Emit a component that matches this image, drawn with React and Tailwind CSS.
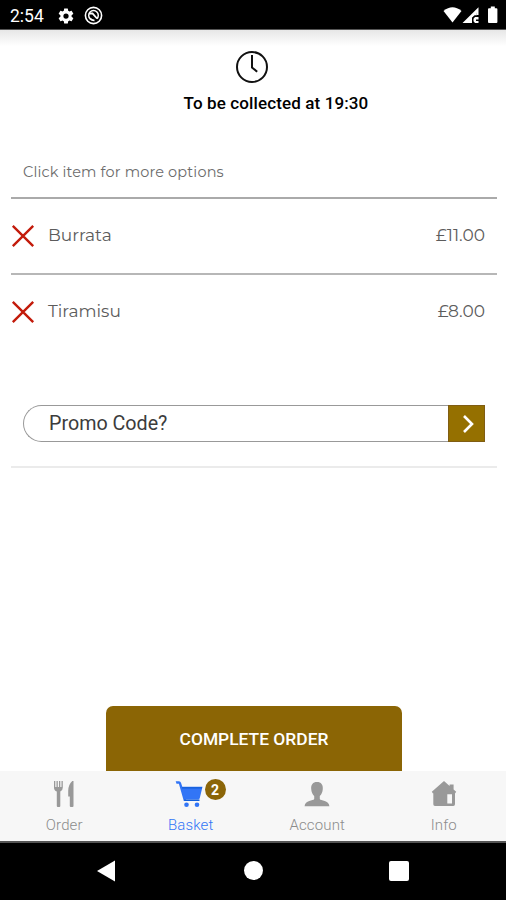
import { useState } from "react";

const items = [
  { id: 1, name: "Burrata", price: 11 },
  { id: 2, name: "Tiramisu", price: 8 },
];

const formatPrice = (price) => `£${price.toFixed(2)}`;

const StatusBar = () => (
  <div className="flex h-[30px] shrink-0 items-start justify-between border-b border-[#555] bg-black text-white">
    <div className="flex h-[30px] items-center pt-[1px] pl-[10px]">
      <span className="w-[47px] text-[17.5px] leading-5 font-normal">2:54</span>
      {/* settings */}
      <svg width="18" height="18" viewBox="0 0 24 24" fill="currentColor">
        <path d="M19.43 12.98c.04-.32.07-.64.07-.98s-.03-.66-.07-.98l2.11-1.65c.19-.15.24-.42.12-.64l-2-3.46c-.12-.22-.39-.3-.61-.22l-2.49 1c-.52-.4-1.08-.73-1.69-.98l-.38-2.65A.49.49 0 0 0 14 2h-4c-.25 0-.46.18-.49.42l-.38 2.65c-.61.25-1.17.59-1.69.98l-2.49-1c-.23-.09-.49 0-.61.22l-2 3.46c-.13.22-.07.49.12.64l2.11 1.65c-.04.32-.07.65-.07.98s.03.66.07.98l-2.11 1.65c-.19.15-.24.42-.12.64l2 3.46c.12.22.39.3.61.22l2.49-1c.52.4 1.08.73 1.69.98l.38 2.65c.03.24.24.42.49.42h4c.25 0 .46-.18.49-.42l.38-2.65c.61-.25 1.17-.59 1.69-.98l2.49 1c.23.09.49 0 .61-.22l2-3.46c.12-.22.07-.49-.12-.64zM12 15.5a3.5 3.5 0 1 1 0-7 3.5 3.5 0 0 1 0 7z" />
      </svg>
      <svg className="mb-[1px] ml-[9px]" width="19" height="19" viewBox="0 0 19 19" fill="none" stroke="currentColor">
        <circle cx="9.5" cy="9.5" r="8.1" strokeWidth="1.6" />
        <path d="M6.2 12.8A4.8 4.8 0 1 1 12.8 12.8" strokeWidth="1.5" />
        <path d="M5 7.5H8.5L13 12.5M6 12.5Q8 14.5 10.5 14.3" strokeWidth="1.8" />
      </svg>
    </div>
    <div className="flex h-[30px] items-center pr-[7px]">
      <svg width="56" height="18" viewBox="0 0 56 18" fill="currentColor">
        <path d="M0.5 5Q9.5-2.5 18.5 5L9.5 16.5Z" />
        <path fillRule="evenodd" d="M19.5 17 35.5 1.2V9H33.8V6.5L26 14.5H29V17Z" />
        <path d="M27 12.5 33.8 5.5V9.2H31.5L29 11.5V15.5H24Z" />
        <path d="M35.5 11V13.5H33V15H35.5V17H32L30.5 15.3V12.8L32 11Z" />
        <path d="M46 2.3H47.8V.6H51.8V2.3H53.4Q54.4 2.3 54.4 3.3V16Q54.4 17 53.4 17H46Q45 17 45 16V3.3Q45 2.3 46 2.3Z" />
      </svg>
    </div>
  </div>
);

const OrderIcon = () => (
  <svg width="22" height="28" viewBox="0 0 22 28" fill="currentColor">
    <path d="M1 1H2.3V7H3.5V1H4.8V7H6V1H7.3V7H8.5V1H9.8V7.5Q9.8 10.5 7.3 11.5V26Q7.3 27 6.3 27H4.8Q3.8 27 3.8 26V11.5Q1 10.5 1 7.5Z" />
    <path d="M20.5 1V26Q20.5 27 19.5 27H17.8Q16.8 27 16.8 26V16.5H15.2V11Q15.2 4.5 19.3 1Z" />
  </svg>
);

const BasketIcon = () => (
  <svg className="-ml-[3px]" width="28" height="28" viewBox="0 0 28 28" fill="currentColor">
    <path d="M.7 1.2H4Q5.5 1.2 6 2.8L7.3 6.7H27.5L24.8 18Q24.4 19.5 22.8 19.5H10.8V21H8.8L3.9 3.8H1.5Z" />
    <path d="M7 7.9H27M9.3 20.2H24.5" stroke="#125ed8" strokeWidth="1.4" />
    <circle cx="11.5" cy="24.7" r="2.3" />
    <circle cx="22" cy="24.7" r="2.3" />
  </svg>
);

const AccountIcon = () => (
  <svg width="26" height="28" viewBox="0 0 26 28" fill="currentColor">
    <path d="M13 2C8.8 2 6.9 4.7 7.2 9C7.4 12 8.5 14.4 10.2 16V19C9.5 21 1 20 .6 26.2H25.4C25 20 16.5 21 15.8 19V16C17.5 14.4 18.6 12 18.8 9C19.1 4.7 17.2 2 13 2Z" />
  </svg>
);

const InfoIcon = () => (
  <svg width="26" height="28" viewBox="0 0 26 28" fill="currentColor">
    <path fillRule="evenodd" d="M13 1 18.6 6V4.5H22.6V9.5L25.2 11.8L24.2 13.3H24V24.3Q24 26 22.3 26H4Q2.3 26 2.3 24.3V13.3H1.8L.8 11.8ZM16.3 14.3V23.4H21V14.3Z" />
  </svg>
);

const tabs = [
  { name: "Order", icon: OrderIcon },
  { name: "Basket", icon: BasketIcon },
  { name: "Account", icon: AccountIcon },
  { name: "Info", icon: InfoIcon },
];

const App = () => {
  const [activeTab, setActiveTab] = useState("Basket");

  return (
    <div className="flex h-[900px] w-[506px] flex-col overflow-hidden bg-white font-['Roboto',sans-serif] text-[#222]">
      <StatusBar />
      <div className="h-4 shrink-0 bg-linear-to-b from-[#e7e7e7] to-white" />

      <main className="flex min-h-0 flex-1 flex-col">
        {/* COLLECTION TIME */}
        <div className="flex h-[103px] shrink-0 flex-col items-center pt-[4px]">
          <svg className="-ml-[2px]" width="34" height="34" viewBox="0 0 34 34" fill="none" stroke="#111" strokeWidth="2">
            <circle cx="17" cy="17" r="15" />
            <path d="M17 5V17.5L22.2 21.7" />
          </svg>
          <p className="mt-[9px] pl-[46px] text-[17px] leading-5 font-medium tracking-[0.12px] whitespace-nowrap text-black">
            To be collected at 19:30
          </p>
        </div>

        {/* ITEMS */}
        <div className="mr-[9px] ml-[11px] shrink-0 font-['Montserrat','Inter',sans-serif] text-[#5c5c5c]">
          <p className="flex h-[50px] items-center border-b-2 border-[#aaa] pl-3 text-[14.5px] tracking-[0.15px] text-[#6c6c6c]">
            Click item for more options
          </p>
          {items.map((item) => (
            <div
              key={item.id}
              className="flex h-[76px] items-center border-b-2 border-[#b7b7b7] pr-3 text-[17px] last:border-transparent"
            >
              <svg className="mb-[1px]" width="24" height="24" viewBox="0 0 24 24" fill="none" stroke="#c31b0b" strokeWidth="2.4">
                <path d="M1.8 1.8 22.2 22.2M22.2 1.8 1.8 22.2" />
              </svg>
              <span className="ml-[13px] flex-1">{item.name}</span>
              <span>{formatPrice(item.price)}</span>
            </div>
          ))}
        </div>

        {/* PROMO CODE */}
        <div className="mr-[9px] ml-[11px] flex h-[117px] shrink-0 items-end border-b-2 border-[#ebebeb] pr-3 pb-[24px] pl-3">
          <div className="flex h-[37px] flex-1 items-center rounded-l-full border border-r-0 border-[#999] pt-[1px] pl-[25px] text-[19.7px] text-[#3c3c3c]">
            Promo Code?
          </div>
          <button className="flex h-[37px] w-[37px] items-center justify-center border border-[#805d13] bg-[#957000]">
            <svg className="ml-[2px]" width="12" height="20" viewBox="0 0 12 20" fill="none" stroke="white" strokeWidth="2.6">
              <path d="M2 2 10 10 2 18" />
            </svg>
          </button>
        </div>

        <button className="mt-auto mr-[104px] ml-[106px] h-[65px] shrink-0 rounded-t-[7px] bg-[#8b6505] pt-[2px] text-[17.4px] font-medium text-white">
          COMPLETE ORDER
        </button>
      </main>

      {/* TABS */}
      <nav className="grid h-[70px] shrink-0 grid-cols-4 bg-[#f7f7f7]">
        {tabs.map(({ name, icon: Icon }) => (
          <button
            key={name}
            onClick={() => setActiveTab(name)}
            className={`relative flex flex-col items-center pt-[9px] pl-[2px] text-[15px] leading-[18px] font-light tracking-[0.15px] ${
              activeTab === name ? "text-[#3275f6]" : "text-[#8c8c8c]"
            }`}
          >
            <span className={activeTab === name ? "" : "text-[#999]"}>
              <Icon />
            </span>
            <span className="mt-[8px]">{name}</span>
            {name === "Basket" && (
              <span className="absolute top-[8px] left-[78px] flex h-[21px] w-[21px] items-center justify-center rounded-full bg-[#8b6508] text-[14px] font-bold tracking-normal text-white">
                2
              </span>
            )}
          </button>
        ))}
      </nav>

      {/* SYSTEM NAVIGATION */}
      <div className="flex h-[59px] shrink-0 items-center border-t-2 border-[#555] bg-black pb-[2px]">
        <svg className="ml-[96px]" width="20" height="22" viewBox="0 0 20 22" fill="white">
          <path d="M1 11 19 .5V21.5Z" />
        </svg>
        <div className="ml-[128px] h-[19px] w-[19px] rounded-full bg-white" />
        <div className="ml-[126px] h-[20px] w-[20px] rounded-[2px] bg-white" />
      </div>
    </div>
  );
};

export default App;
